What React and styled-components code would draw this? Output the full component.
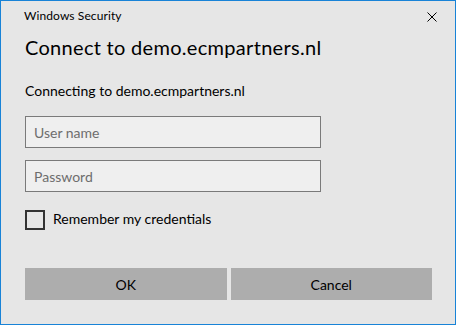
import React from "react";
import styled, { createGlobalStyle } from "styled-components";

const Global = createGlobalStyle`
  html, body { margin: 0; padding: 0; background: #e6e6e6; }
  * { box-sizing: border-box; }
  body { font-family: Lato, "Noto Sans", sans-serif; }
`;

const Window = styled.div`
  width: 456px;
  height: 325px;
  border: 1px solid #1883d7;
  background: #e6e6e6;
  display: flex;
  flex-direction: column;
  color: #000;
`;

const TitleBar = styled.div`
  height: 31px;
  display: flex;
  align-items: flex-start;
  justify-content: space-between;
`;

const TitleText = styled.div`
  padding: 7px 0 0 23px;
  font-size: 12px;
  line-height: 16px;
  letter-spacing: 0.1px;
`;

const CloseButton = styled.div`
  width: 46px;
  height: 31px;
  display: flex;
  align-items: center;
  justify-content: center;
`;

const Content = styled.div`
  padding: 0 23px 0 24px;
  display: flex;
  flex-direction: column;
`;

const Heading = styled.div`
  margin-top: 1px;
  font-size: 20px;
  line-height: 28px;
  letter-spacing: 0.3px;
`;

const Message = styled.div`
  margin-top: 20px;
  font-size: 14px;
  line-height: 20px;
`;

const Field = styled.input`
  margin-top: ${(p) => p.$gap}px;
  width: 296px;
  height: 32px;
  border: 1px solid #7a7a7a;
  background: #efefef;
  padding: 0 8px;
  font-family: Lato, sans-serif;
  font-size: 14px;
  color: #000;
  outline: none;
  &::placeholder { color: #6d6d6d; }
`;

const CheckRow = styled.label`
  margin-top: 18px;
  display: flex;
  align-items: flex-start;
  gap: 8px;
  font-size: 14px;
  line-height: 18px;
`;

const Box = styled.span`
  width: 20px;
  height: 20px;
  border: 2px solid #333;
  flex: none;
`;

const Buttons = styled.div`
  margin-top: 38px;
  display: grid;
  grid-template-columns: 1fr 1fr;
  gap: 4px;
`;

const Button = styled.button`
  height: 32px;
  border: none;
  background: #adadad;
  font-family: Lato, sans-serif;
  font-size: 14px;
  color: #000;
  padding: 0;
`;

export default function App() {
  return (
    <>
      <Global />
      <Window>
        <TitleBar>
          <TitleText>Windows Security</TitleText>
          <CloseButton>
            <svg width="10" height="10" viewBox="0 0 10 10">
              <path d="M0.5 0.5L9.5 9.5M9.5 0.5L0.5 9.5" stroke="#000" strokeWidth="1" />
            </svg>
          </CloseButton>
        </TitleBar>
        <Content>
          <Heading>Connect to demo.ecmpartners.nl</Heading>
          <Message>Connecting to demo.ecmpartners.nl</Message>
          <Field $gap={15} placeholder="User name" />
          <Field $gap={12} type="password" placeholder="Password" />
          <CheckRow>
            <Box />
            Remember my credentials
          </CheckRow>
          <Buttons>
            <Button>OK</Button>
            <Button>Cancel</Button>
          </Buttons>
        </Content>
      </Window>
    </>
  );
}
